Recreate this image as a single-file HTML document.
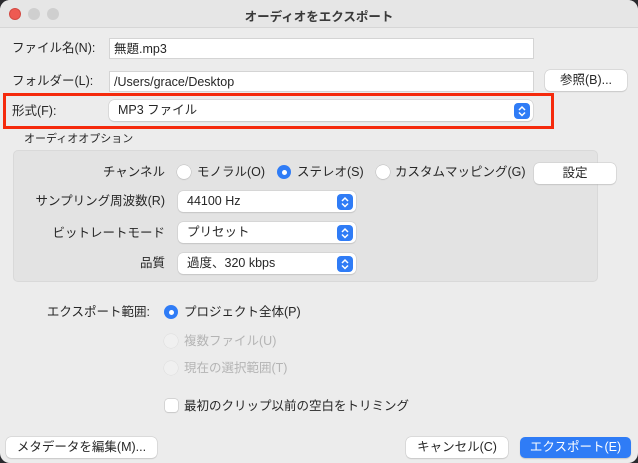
<!DOCTYPE html>
<html><head><meta charset="utf-8"><style>
*{box-sizing:border-box;margin:0;padding:0}
body{width:638px;height:463px;background:#2a2a2e;font-family:"Liberation Sans","Noto Sans CJK JP",sans-serif;font-size:12.5px;color:#262626;overflow:hidden;position:relative}
.win{position:absolute;left:0;top:0;width:638px;height:463px;background:#ececec;border-radius:10px;overflow:hidden}
.tb{position:absolute;left:0;top:0;width:638px;height:28px;background:#e6e6e6;border-bottom:1px solid #d6d6d6}
.dot{position:absolute;top:8px;width:12px;height:12px;border-radius:50%}
.title{position:absolute;top:6px;left:0;width:638px;text-align:center;font-weight:bold;font-size:12.5px;color:#3a3a3a}
.a{position:absolute;white-space:nowrap;line-height:16px}
.tf{position:absolute;background:#fff;border:1px solid #d4d4d4;height:21px;padding:2px 4px;line-height:16px}
.sel{position:absolute;background:#fff;border-radius:5px;box-shadow:0 0 0 .5px #c8c8c8,0 1px 1px rgba(0,0,0,.15);height:21px;padding:2px 9px;line-height:17px}
.arr{position:absolute;right:3px;top:3px;width:16px;height:16px;border-radius:4px;background:#2f7cf6}
.btn{position:absolute;background:#fff;border-radius:5px;box-shadow:0 0 0 .5px #c8c8c8,0 1px 1px rgba(0,0,0,.15);height:21px;line-height:21px;text-align:center}
.rd{position:absolute;width:14px;height:14px;border-radius:50%;background:#fff;box-shadow:0 0 0 .5px #bdbdbd,0 1px 1px rgba(0,0,0,.1)}
.rd.on{background:#2f7cf6;box-shadow:none}
.rd.on::after{content:"";position:absolute;left:4.5px;top:4.5px;width:5px;height:5px;border-radius:50%;background:#fff}
.rd.dis{background:#f0f0f0;box-shadow:0 0 0 .5px #dcdcdc}
.gray{color:#b4b4b4}
.r{text-align:right}
</style></head><body><div class="win">
<div class="tb">
<div class="dot" style="left:9px;background:#ee5a52;border:.5px solid #d34a43"></div>
<div class="dot" style="left:28px;background:#cfcfcf"></div>
<div class="dot" style="left:47px;background:#cfcfcf"></div>
<div class="title">オーディオをエクスポート</div>
</div>

<div class="a" style="left:12px;top:40px">ファイル名(N):</div>
<div class="tf" style="left:109px;top:38px;width:425px">無題.mp3</div>
<div class="a" style="left:12px;top:73px">フォルダー(L):</div>
<div class="tf" style="left:109px;top:71px;width:425px">/Users/grace/Desktop</div>
<div class="btn" style="left:545px;top:70px;width:82px">参照(B)...</div>

<div style="position:absolute;left:3px;top:93px;width:551px;height:36px;border:3px solid #f52a0c"></div>
<div class="a" style="left:12px;top:103px">形式(F):</div>
<div class="sel" style="left:109px;top:100px;width:424px;padding-left:9px">MP3 ファイル<div class="arr"><svg width="16" height="16"><path d="M5 7l3-3 3 3M5 9.5l3 3 3-3" stroke="#fff" stroke-width="1.5" fill="none"/></svg></div></div>

<div class="a" style="left:24px;top:131px;font-size:11px">オーディオオプション</div>
<div style="position:absolute;left:13px;top:150px;width:585px;height:132px;background:#e3e3e3;border:1px solid #d9d9d9;border-radius:5px"></div>

<div class="a r" style="left:40px;top:164px;width:125px">チャンネル</div>
<div class="rd" style="left:177px;top:165px"></div><div class="a" style="left:197px;top:164px">モノラル(O)</div>
<div class="rd on" style="left:277px;top:165px"></div><div class="a" style="left:297px;top:164px">ステレオ(S)</div>
<div class="rd" style="left:376px;top:165px"></div><div class="a" style="left:395px;top:164px">カスタムマッピング(G)</div>
<div class="btn" style="left:534px;top:163px;width:82px">設定</div>

<div class="a r" style="left:20px;top:193px;width:145px">サンプリング周波数(R)</div>
<div class="sel" style="left:178px;top:191px;width:178px">44100 Hz<div class="arr"><svg width="16" height="16"><path d="M5 7l3-3 3 3M5 9.5l3 3 3-3" stroke="#fff" stroke-width="1.5" fill="none"/></svg></div></div>
<div class="a r" style="left:20px;top:225px;width:145px">ビットレートモード</div>
<div class="sel" style="left:178px;top:222px;width:178px">プリセット<div class="arr"><svg width="16" height="16"><path d="M5 7l3-3 3 3M5 9.5l3 3 3-3" stroke="#fff" stroke-width="1.5" fill="none"/></svg></div></div>
<div class="a r" style="left:20px;top:255px;width:145px">品質</div>
<div class="sel" style="left:178px;top:253px;width:178px">過度、320 kbps<div class="arr"><svg width="16" height="16"><path d="M5 7l3-3 3 3M5 9.5l3 3 3-3" stroke="#fff" stroke-width="1.5" fill="none"/></svg></div></div>

<div class="a r" style="left:20px;top:304px;width:130px">エクスポート範囲:</div>
<div class="rd on" style="left:164px;top:305px"></div><div class="a" style="left:184px;top:304px">プロジェクト全体(P)</div>
<div class="rd dis" style="left:164px;top:334px"></div><div class="a gray" style="left:184px;top:333px">複数ファイル(U)</div>
<div class="rd dis" style="left:164px;top:361px"></div><div class="a gray" style="left:184px;top:360px">現在の選択範囲(T)</div>
<div style="position:absolute;left:165px;top:399px;width:13px;height:13px;background:#fff;border-radius:3px;box-shadow:0 0 0 .5px #bdbdbd,0 1px 1px rgba(0,0,0,.1)"></div>
<div class="a" style="left:184px;top:398px">最初のクリップ以前の空白をトリミング</div>

<div class="btn" style="left:6px;top:437px;width:151px">メタデータを編集(M)...</div>
<div class="btn" style="left:406px;top:437px;width:102px">キャンセル(C)</div>
<div class="btn" style="left:520px;top:437px;width:111px;background:#2f7cf6;color:#fff;box-shadow:0 1px 1px rgba(0,0,0,.15)">エクスポート(E)</div>
</div></body></html>
